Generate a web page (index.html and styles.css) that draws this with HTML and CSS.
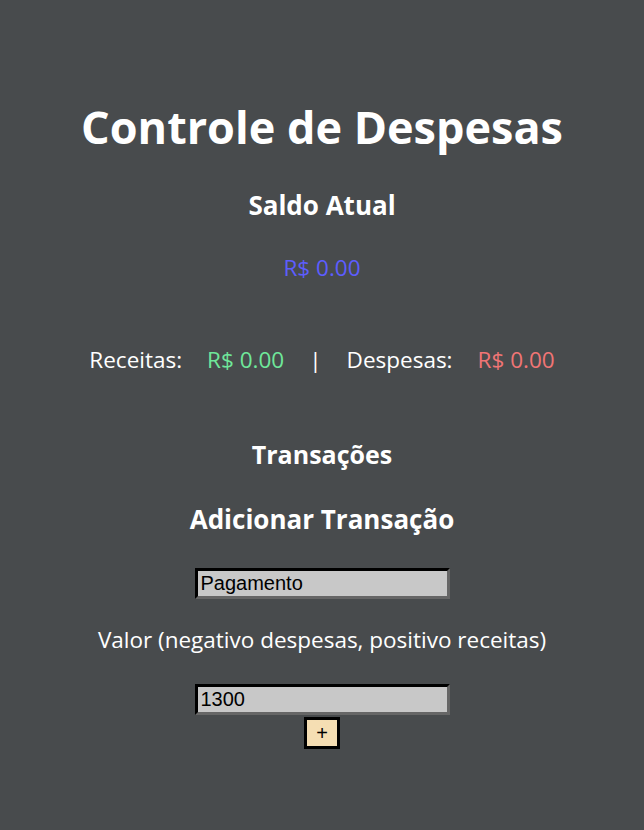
FILE: index.html
```html
<!DOCTYPE html>
<html lang="pt">
<head>
<meta charset="utf-8">
<title>Controle de Despesas</title>
<link rel="stylesheet" href="styles.css">
</head>
<body>
<div class="app">
  <h1 class="title">Controle de Despesas</h1>
  <h2 class="subtitle">Saldo Atual</h2>
  <p class="balance">R$ 0.00</p>
  <div class="summary">
    <span>Receitas:</span>
    <span class="income">R$ 0.00</span>
    <span>|</span>
    <span>Despesas:</span>
    <span class="expense">R$ 0.00</span>
  </div>
  <h2 class="section">Transações</h2>
  <h2 class="section add">Adicionar Transação</h2>
  <form class="form">
    <input class="field" type="text" value="Pagamento">
    <label class="label">Valor (negativo despesas, positivo receitas)</label>
    <input class="field" type="text" value="1300">
    <button class="btn" type="button">+</button>
  </form>
</div>
</body>
</html>
```
FILE: styles.css
```css
html, body {
  margin: 0;
  padding: 0;
  background: #484b4d;
}
body {
  font-family: "Open Sans", "Noto Sans", sans-serif;
  color: #ffffff;
}
.app {
  display: flex;
  flex-direction: column;
  align-items: center;
  padding-top: 96px;
}
.title {
  margin: 0;
  font-size: 45px;
  font-weight: 700;
  line-height: 62px;
}
.subtitle {
  margin: 30px 0 0;
  font-size: 26px;
  font-weight: 700;
  line-height: 34px;
}
.balance {
  margin: 32px 0 0;
  font-size: 22.5px;
  line-height: 28px;
  color: #5d5dff;
}
.summary {
  margin-top: 64px;
  display: flex;
  gap: 25px;
  font-size: 22.5px;
  line-height: 28px;
}
.income { color: #6fe79a; }
.expense { color: #f07575; }
.section {
  margin: 63px 0 0;
  font-size: 25px;
  font-weight: 700;
  line-height: 34px;
}
.add {
  margin-top: 31px;
  font-size: 26px;
}
.form {
  margin-top: 32px;
  display: flex;
  flex-direction: column;
  align-items: center;
}
.field {
  box-sizing: border-box;
  width: 255px;
  height: 31px;
  border: 3px inset #333;
  border-color: #222 #666 #666 #222;
  background: #c8c8c8;
  font-family: "Liberation Sans", Arial, sans-serif;
  font-size: 20px;
  color: #000;
  padding: 0 3px;
}
.label {
  margin: 26px 0 29px;
  font-size: 22.5px;
  line-height: 30px;
}
.btn {
  margin-top: 2px;
  box-sizing: border-box;
  width: 36px;
  height: 32px;
  border: 3px solid #000;
  background: #f5deb3;
  font-family: "Liberation Sans", Arial, sans-serif;
  font-size: 20px;
  color: #000;
  padding: 0;
}
```
